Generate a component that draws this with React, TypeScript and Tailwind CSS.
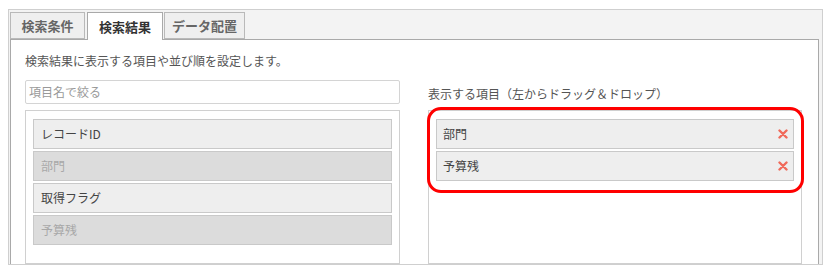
import React from "react";

const font = { fontFamily: '"Noto Sans CJK JP", "Noto Sans", sans-serif' };

function XIcon() {
  return (
    <svg width="10" height="10" viewBox="0 0 10 10" className="shrink-0">
      <path d="M1.5 1.5 L8.5 8.5 M8.5 1.5 L1.5 8.5" stroke="#f06a5a" strokeWidth="2.4" strokeLinecap="round" />
    </svg>
  );
}

function LeftItem({ label, disabled }: { label: string; disabled?: boolean }) {
  return (
    <div
      className={
        disabled
          ? "h-[30px] border border-[#c9c9c9] bg-[#dcdcdc] pl-[7px] flex items-center text-[12px] leading-[18px] text-[#a8a8a8]"
          : "h-[30px] border border-[#c9c9c9] bg-[#eeeeee] pl-[7px] flex items-center text-[12px] leading-[18px] text-[#444]"
      }
    >
      {label}
    </div>
  );
}

function RightItem({ label }: { label: string }) {
  return (
    <div className="h-[30px] border border-[#c9c9c9] bg-[#eeeeee] pl-[6px] pr-[5px] flex items-center justify-between text-[12px] leading-[18px] text-[#444]">
      <span>{label}</span>
      <XIcon />
    </div>
  );
}

export default function App() {
  return (
    <div className="w-[834px] h-[275px] bg-white pl-[8px] pt-[9px]" style={font}>
      <div className="w-[815px] h-[256px] border border-[#cfcfcf] bg-[#f3f3f3] pl-[1px] pr-[3px] overflow-hidden flex flex-col">
        <div className="flex gap-[2px] pt-[2px] h-[29px] shrink-0">
          <div className="w-[75px] h-[27px] border border-[#b9b9b9] bg-[#efefef] flex items-center justify-center text-[13px] font-bold text-[#666] leading-[18px]">
            検索条件
          </div>
          <div className="w-[76px] h-[28px] border border-b-0 border-[#a9a9a9] bg-white flex items-center justify-center text-[13px] font-bold text-[#333] leading-[18px] relative z-10">
            検索結果
          </div>
          <div className="w-[81px] h-[27px] ml-[-1px] border border-[#b9b9b9] bg-[#efefef] flex items-center justify-center text-[13px] font-bold text-[#666] leading-[18px]">
            データ配置
          </div>
        </div>
        <div className="flex-1 bg-white border-l border-r border-t border-[#a9a9a9] pt-[12px] pl-[14px] flex flex-col">
          <div className="text-[12px] leading-[18px] text-[#555]">検索結果に表示する項目や並び順を設定します。</div>
          <div className="flex gap-[28px] mt-[10px] flex-1">
            <div className="w-[375px] flex flex-col">
              <div className="h-[24px] border border-[#d4d4d4] rounded-[2px] flex items-center pl-[3px] text-[12px] leading-[18px] text-[#999]">
                項目名で絞る
              </div>
              <div className="mt-[6px] flex-1 border border-[#d0d0d0] px-[7px] pt-[8px] flex flex-col gap-[2px]">
                <LeftItem label="レコードID" />
                <LeftItem label="部門" disabled />
                <LeftItem label="取得フラグ" />
                <LeftItem label="予算残" disabled />
              </div>
            </div>
            <div className="w-[374px] flex flex-col">
              <div className="h-[24px] pt-[5px] text-[12px] leading-[18px] text-[#555]">表示する項目（左からドラッグ＆ドロップ）</div>
              <div className="mt-[6px] flex-1 border border-[#d0d0d0] px-[7px] pt-[8px] flex flex-col gap-[2px] relative">
                <RightItem label="部門" />
                <RightItem label="予算残" />
                <div className="absolute left-[-2px] top-[-4px] w-[377px] h-[86px] border-[3px] border-[#ff0000] rounded-[14px] pointer-events-none" />
              </div>
            </div>
          </div>
        </div>
      </div>
    </div>
  );
}
